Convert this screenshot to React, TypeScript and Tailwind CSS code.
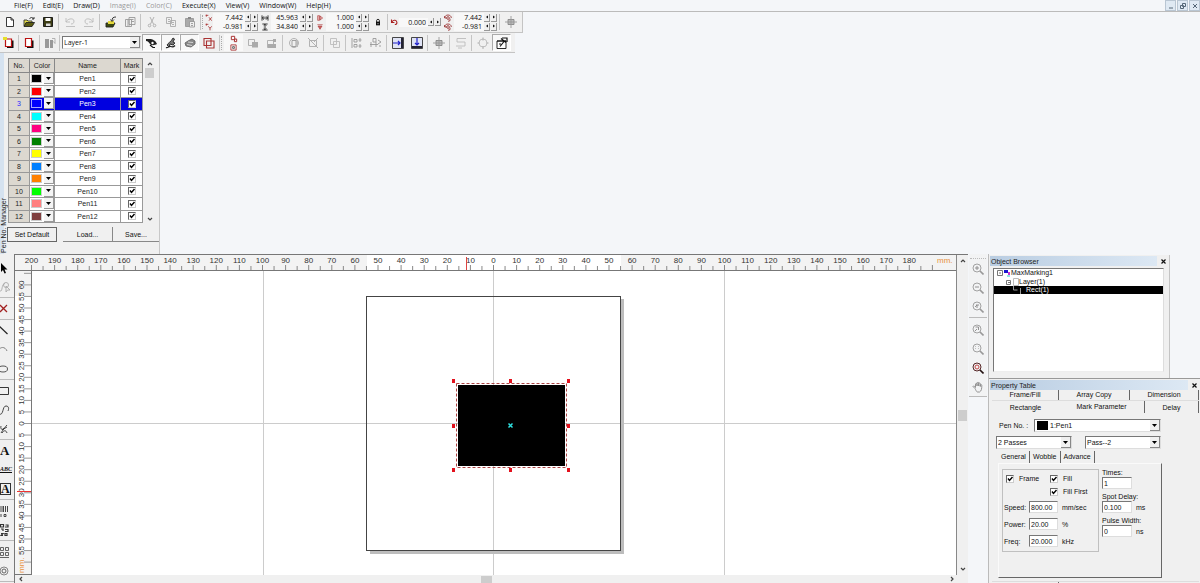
import { useState } from "react";
import type { ReactNode } from "react";
import clsx from "clsx";

const MENUS = [
  { label: "File(F)" },
  { label: "Edit(E)" },
  { label: "Draw(D)" },
  { label: "Image(I)", disabled: true },
  { label: "Color(C)", disabled: true },
  { label: "Execute(X)" },
  { label: "View(V)" },
  { label: "Window(W)" },
  { label: "Help(H)" },
];

const PENS = [
  "#000000",
  "#ff0000",
  "#0000ff",
  "#00ffff",
  "#ff0080",
  "#008000",
  "#ffff00",
  "#0080ff",
  "#ff8000",
  "#00ff00",
  "#ff8080",
  "#804040",
];

// pixels per 5 mm on the rulers
const STEP = 11.55;

const ICONS: Record<string, ReactNode> = {
  new: <path d="M2.500 1.500h4.500l2.500 2.500v6.500h-7zM7 1.500v2.500h2.500" fill="#fff" stroke="#222" />,
  open: (
    <>
      <path d="M1 10V4h3l1 1h4v2" fill="#e8e04a" stroke="#333" />
      <path d="M1 10.500l2-4h8.500l-2.500 4z" fill="#5b5b12" stroke="#222" />
      <path d="M6.500 3c1-2 3-2 4 0M9 3h2V1" stroke="#222" />
    </>
  ),
  save: (
    <>
      <path d="M1.500 1.500h9v9h-9z" fill="#3c3c14" stroke="#111" />
      <path d="M3.500 2h5v3h-5z" fill="#fff" />
      <path d="M4 7.500h4.500V10H4z" fill="#ddd" />
    </>
  ),
  undo: <path d="M2 2v4h4M2 6c2-4 8-4 8-1 0 2-1 3-3 3M2 10.500h9" stroke="#bbb" />,
  redo: <path d="M10 2v4H6M10 6C8 2 2 2 2 5c0 2 1 3 3 3M1 10.500h9" stroke="#bbb" />,
  importFile: (
    <>
      <path d="M1 7h9l-2 4H1z" fill="#3d4a10" stroke="#222" />
      <path d="M3 5h6v3H3z" fill="#e5d83c" />
      <path d="M7 5c0-3 1-4 4-4M5.500 3.500L7 5.500l2-2" stroke="#222" />
    </>
  ),
  hatch: (
    <>
      <path d="M1.500 3.500h6v7h-6zM5 1.500h6v7H5z" stroke="#999" />
      <path d="M3 5h3M3 7h3M3 9h3M6.500 3.500h3M7 5.500h3" stroke="#999" />
    </>
  ),
  cut: (
    <>
      <path d="M4 1l3.500 7M8 1L4.500 8" stroke="#aaa" />
      <circle cx="3.500" cy="9.500" r="1.300" stroke="#aaa" />
      <circle cx="8.500" cy="9.500" r="1.300" stroke="#aaa" />
    </>
  ),
  copy: <path d="M1.500 1.500h5v6h-5zM5.500 4.500h5v6h-5zM3 3.500h2M3 5.500h2M7 6.500h2M7 8.500h2" stroke="#aaa" />,
  paste: (
    <>
      <path d="M1.500 2.500h8v8h-8z" fill="#aaa" stroke="#999" />
      <path d="M4 1h3v2H4z" fill="#888" />
      <path d="M5.500 5.500h5v5.500h-5zM7 7.500h2M7 9.500h2" fill="#eee" stroke="#999" />
    </>
  ),
  axis: <path d="M1 2h4M2 1v3M6 5l4 5M10 5l-4 5" stroke="#a33" strokeWidth="1.300" />,
  axisY: <path d="M1 2h4M2 1v3M5 5l2.500 3L10 5M7.500 8v3" stroke="#a33" strokeWidth="1.300" />,
  width: <path d="M1.500 2v8M10.500 2v8M2 6h8M4.500 3.500L2 6l2.500 2.500M7.500 3.500L10 6l-2.500 2.500" stroke="#222" strokeWidth="1.300" />,
  height: <path d="M2 1.500h8M2 10.500h8M6 2v8M4 4l2-2 2 2M4 8l2 2 2-2" stroke="#222" strokeWidth="1.300" />,
  scaleX: <path d="M2.500 2.500h3v7h-3zM6 3l4 3-4 3z" fill="#e9b5b5" stroke="#a33" />,
  scaleY: <path d="M2 2.500h8M3 4.500h6L6 9.500z" fill="#c66" stroke="#a33" />,
  lock: (
    <>
      <path d="M3 5.500h6V11H3z" fill="#111" />
      <path d="M4 6V3.500c0-2 4-2 4 0V6" stroke="#111" strokeWidth="1.400" />
      <path d="M5.500 7.500h1v2h-1z" fill="#fff" />
    </>
  ),
  rotate: <path d="M3 3v3.500h3.500M3.500 6c2-3.500 6-2 6 .5 0 1.500-1 2.500-2.500 2.500" stroke="#a22" strokeWidth="1.300" />,
  rotCenter: (
    <>
      <circle cx="6" cy="6" r="2" stroke="#933" strokeWidth="1.300" />
      <path d="M1 6c0-6 10-6 10 0M1 3v3h3M9 7v3l-3 1" stroke="#933" strokeWidth="1.300" />
    </>
  ),
  center: (
    <>
      <path d="M3 3.500h6v5H3z" fill="#bbb" stroke="#888" />
      <path d="M6 0v12M0 6h12" stroke="#999" />
    </>
  ),
  newLayer: (
    <>
      <path d="M4 3.500h6.500v7.500H4z" fill="#111" />
      <path d="M2.500 2h6v7.500h-6z" fill="#fff" stroke="#b11" strokeWidth="1.200" />
      <path d="M0 0h4v3H0z" fill="#e6df2a" />
    </>
  ),
  layer: (
    <>
      <path d="M4 3.500h6.500v7.500H4z" fill="#111" />
      <path d="M2.500 1.500h6v8h-6z" fill="#fff" stroke="#b11" strokeWidth="1.200" />
    </>
  ),
  layerMove: (
    <>
      <path d="M1 2h4v9H1zM6 3h3v8H6z" fill="#999" />
      <path d="M8 1.500h3v5M9.500 4.500l1.500 2" stroke="#aaa" />
    </>
  ),
  eye: (
    <>
      <path d="M0 2l3 0c4 0 7 2 8 5-2 1-5 2-7 0C3 5.500 2 4 0 4z" fill="#222" />
      <circle cx="6.500" cy="6" r="1.200" fill="#fff" />
      <path d="M4 8l3 2.500h2" stroke="#111" strokeWidth="1.200" />
    </>
  ),
  pencil: (
    <>
      <path d="M2 8c1-2 4-3 6-7l1.500 1L8 5l2 1-2 2-3-1-1 3z" fill="#777" stroke="#222" />
      <path d="M1 10.500c2 1 3-2 5-1s3 0 4-1" stroke="#222" strokeWidth="1.300" />
    </>
  ),
  printer: (
    <>
      <path d="M1 6l3-2 4-2 3 2v3L7 10 2 9z" fill="#888" stroke="#666" />
      <path d="M4 5l5 .5M3 7.500l5 1" stroke="#ddd" />
    </>
  ),
  squares: <path d="M1 1.500h7v7H1zM3.500 4h7.500v7H3.500z" stroke="#a33" strokeWidth="1.100" />,
  snapLink: <path d="M2 2h5v5H2zM7 6h3v4H6.500z" stroke="#a33" strokeWidth="1.500" />,
  snapBox: (
    <>
      <path d="M1.500 1.500h9v9h-9z" stroke="#a33" strokeWidth="1.500" />
      <path d="M4.500 4.500h3v3h-3z" stroke="#333" strokeWidth="1.200" />
    </>
  ),
  union: (
    <>
      <path d="M1.500 2.500h6v6h-6z" stroke="#aaa" />
      <path d="M5 5h6v5.500H5z" fill="#aaa" />
    </>
  ),
  subtract: (
    <>
      <path d="M1.500 3.500h6v7h-6z" stroke="#aaa" />
      <path d="M2 7h8v4H2zM7 2h3v3H7z" fill="#aaa" />
    </>
  ),
  solid: (
    <>
      <circle cx="6" cy="6" r="4.500" stroke="#aaa" />
      <path d="M4 3.500h4v6H4z" stroke="#999" />
      <path d="M8 3h2v7H8z" fill="#bbb" />
    </>
  ),
  noFill: (
    <>
      <path d="M2.500 3.500h7v6h-7z" stroke="#aaa" />
      <path d="M1 1l10 10M11 1L7 5" stroke="#aaa" />
    </>
  ),
  group: <path d="M1.500 1.500h6v6h-6zM4.500 4.500h6v6h-6z" stroke="#bbb" />,
  alignTop: <path d="M1 1v10M3 2.500h3v2.500H3zM3 7.500h3V10H3zM9 1v4M7.500 3h3M9 7v4M7.500 9h3" stroke="#999" />,
  alignSide: <path d="M0 7.500h8M3 1.500h3V5H3zM1 5v5M6 5v5M8 3l3 2-3 2M9 9h2" stroke="#999" />,
  dockRight: (
    <>
      <path d="M.5.500h11v11H.5z" fill="#dfe3f5" stroke="#333" />
      <path d="M9 1h2v10H9z" fill="#223" />
      <path d="M1 6h7M6 4l2 2-2 2" stroke="#22c" strokeWidth="1.200" />
    </>
  ),
  dockDown: (
    <>
      <path d="M.5.500h11v11H.5z" fill="#dfe3f5" stroke="#333" />
      <path d="M1 9h10v2H1z" fill="#223" />
      <path d="M6 1v7M4 6l2 2 2-2" stroke="#22c" strokeWidth="1.200" />
    </>
  ),
  path: <path d="M11 1.500H2v3.500h8v4H1M3 11h4" stroke="#bbb" />,
  circle: (
    <>
      <circle cx="6" cy="6" r="4" stroke="#bbb" />
      <path d="M6 .5v3M6 9v3M.5 6h2M9.500 6h2" stroke="#aaa" />
    </>
  ),
  props: (
    <>
      <path d="M1 4h9v7.500H1z" fill="#fff" stroke="#111" />
      <path d="M1 4h9M4 9.500l4-5M5 1.500l5 4M6 1h5v4M3 7h2" stroke="#111" strokeWidth="1.200" />
    </>
  ),
  cursor: <path d="M1 1v9l2-2 1.500 3.500L6 11 4.500 7.500h3z" fill="#000" />,
  node: (
    <>
      <path d="M0 10C3 11 1 3 5 2.500M6 5v6l1.500-2H10z" stroke="#aaa" />
      <circle cx="6" cy="4" r="2.500" stroke="#aaa" />
    </>
  ),
  del: <path d="M0 2l7 7M7 2L0 9" stroke="#a12020" strokeWidth="1.300" />,
  line: <path d="M-1 1l8.500 8" stroke="#222" strokeWidth="1.200" />,
  arc: <path d="M-1 6c1-3 6-4 8 1" stroke="#777" />,
  ellipse: <ellipse cx="3" cy="6" rx="4.500" ry="3" stroke="#444" />,
  rect: <path d="M-1 2.500h9.500v7H-1z" stroke="#222" />,
  curve: <path d="M-1 10c5 2 3-8 7-8 3 0 3 3 2 5" stroke="#333" />,
  pen: <path d="M1 10c2-3 4-6 6-8M1 3c-1 4 2 4 3 2M2 10c2-3 4-3 5 0M2 7l5-3" stroke="#333" />,
  barcode: <path d="M0 1v6M2 1v6M3.500 1v6M5.500 1v6M7.500 1v6M1 9v3M4 9.500h2v2H4z" stroke="#333" />,
  qr: <path d="M.5.500h3v2.500h-3zM5.500 1H8v2H5M1 5h2v2M5 5.500h3v2H5M1 9.500h2l-2 2h2M5 9.500h2v2H5z" stroke="#333" strokeWidth="1.200" />,
  tiles: <path d="M.5 1.500h3v3h-3zM5.500 1.500h3v3h-3zM.5 6.500h3v3h-3zM5.500 6.500h3v3h-3zM0 11.500h9" stroke="#555" />,
  spiral: (
    <>
      <circle cx="4" cy="6" r="4" stroke="#777" />
      <circle cx="4" cy="6" r="2" stroke="#555" />
    </>
  ),
  zoomIn: <path d="M3 5h4M5 3v4" stroke="#888" />,
  zoomOut: <path d="M3 5h4" stroke="#888" />,
  zoomPrev: <path d="M3 6l2-2v3M4 4h3" stroke="#888" />,
  zoomAll: <path d="M3.500 3h3v3M3 7l2-2" stroke="#888" />,
  zoomPage: <path d="M3.500 3v4M6.500 3v4" stroke="#bbb" strokeDasharray="1" />,
  zoomObj: <circle cx="5" cy="5" r="2" stroke="#b33" />,
  hand: (
    <path
      d="M3 7.500L1 5.500c.5-1 1.500-.5 2.500 1V3c.5-1 1.500-1 1.500 0v2V2c.5-1 1.700-1 1.700 0v3V2.500c.5-.8 1.600-.6 1.600.3V5.500V4c.5-.8 1.500-.5 1.500.3 0 3.500-.3 5.700-2.300 6.700H5.500C4 10.500 4 9 3 7.500z"
      stroke="#888"
    />
  ),
};

function Icon({ name, size = "h-3 w-3" }: { name: string; size?: string }) {
  const lens = name.startsWith("zoom");
  const dark = name === "zoomObj";
  return (
    <svg viewBox="0 0 12 12" className={clsx("shrink-0", size)} fill="none" strokeWidth="0.9" aria-hidden>
      {lens && (
        <>
          <circle cx="5" cy="5" r="4" stroke={dark ? "#411" : "#999"} />
          <path d="M8 8l3.500 3.500" stroke={dark ? "#211" : "#999"} strokeWidth="1.600" />
        </>
      )}
      {ICONS[name]}
    </svg>
  );
}

function Tool({ name, width = "w-[19px]", pressed }: { name: string; width?: string; pressed?: boolean }) {
  return (
    <button
      type="button"
      aria-label={name}
      aria-pressed={pressed}
      className={clsx(
        "flex h-[17px] shrink-0 items-center justify-center",
        width,
        pressed && "border border-b-white border-r-white border-l-[#aaa] border-t-[#aaa] bg-[#f8f8f8]"
      )}
    >
      <Icon name={name} />
    </button>
  );
}

const Sep = () => <div className="mx-px h-4 w-px shrink-0 bg-[#c4c4c4]" />;
const Grip = () => <div className="mr-px h-3.5 w-0.5 shrink-0 border-l border-dotted border-[#aaa]" />;

function Spin({ label, value, width }: { label: string; value: string; width: string }) {
  const [text, setText] = useState(value);
  return (
    <div className="flex h-[9px] items-center">
      <input
        aria-label={label}
        value={text}
        onChange={(e) => setText(e.target.value)}
        className={clsx("h-[9px] bg-[#f8f8f8] pr-0.5 text-right leading-[9px] outline-none", width)}
      />
      <div className="flex w-3.5 gap-px">
        {["◂", "▸"].map((arrow) => (
          <button
            key={arrow}
            type="button"
            aria-label={`${label} ${arrow === "◂" ? "down" : "up"}`}
            className="flex h-2 w-1.5 items-center justify-center border-b border-r border-[#999] bg-[#f0f0f0]"
          >
            <svg viewBox="0 0 4 4" className="h-1 w-1" aria-hidden>
              <path d={arrow === "◂" ? "M3 .5v3L1 2z" : "M1 .5v3L3 2z"} fill="#111" />
            </svg>
          </button>
        ))}
      </div>
    </div>
  );
}

function SpinPair({
  icons,
  iconWidth = "w-3",
  width,
  labels,
  values,
}: {
  icons: [string, string];
  iconWidth?: string;
  width: string;
  labels: [string, string];
  values: [string, string];
}) {
  return (
    <div className="flex shrink-0 flex-col">
      {values.map((v, i) => (
        <div key={labels[i]} className="flex items-center">
          <div className={clsx("flex justify-center", iconWidth)}>
            <Icon name={icons[i]} size="h-2 w-2" />
          </div>
          <Spin label={labels[i]} value={v} width={width} />
        </div>
      ))}
    </div>
  );
}

function Combo({
  label,
  options,
  className,
  swatch,
}: {
  label: string;
  options: string[];
  className?: string;
  swatch?: boolean;
}) {
  return (
    <div className={clsx("relative h-[13px] border border-[#777] border-b-[#ddd] border-r-[#ddd] bg-white", className)}>
      <select
        aria-label={label}
        className={clsx("block h-full w-full appearance-none bg-transparent leading-[11px] outline-none", swatch ? "pl-[15px]" : "pl-px")}
      >
        {options.map((o) => (
          <option key={o}>{o}</option>
        ))}
      </select>
      {swatch && <span className="pointer-events-none absolute left-0.5 top-px h-[9px] w-[11px] bg-black" />}
      <span className="pointer-events-none absolute right-0 top-0 flex h-full w-2.5 items-center justify-center border-b border-r border-[#888] bg-[#f0f0f0]">
        <DownArrow />
      </span>
    </div>
  );
}

const DownArrow = () => (
  <svg viewBox="0 0 5 3" className="h-[3px] w-[5px]" aria-hidden>
    <path d="M0 0h5L2.500 3z" fill="#000" />
  </svg>
);

function Check({ label, text }: { label: string; text?: string }) {
  return (
    <label className="inline-flex items-center gap-[5px] leading-[9px]">
      <span className="relative block h-2 w-2">
        <input
          type="checkbox"
          defaultChecked
          aria-label={label}
          className="peer block h-2 w-2 appearance-none border border-[#ccc] border-l-[#666] border-t-[#666] bg-white"
        />
        <svg viewBox="0 0 8 8" className="pointer-events-none absolute inset-0 hidden peer-checked:block" fill="none" aria-hidden>
          <path d="M2 3.500l1.500 2L6.500 2" stroke="#000" strokeWidth="1.400" />
        </svg>
      </span>
      {text}
    </label>
  );
}

function Chevron({ d }: { d: string }) {
  return (
    <svg viewBox="0 0 6 6" className="h-1.5 w-1.5" fill="none" aria-hidden>
      <path d={d} stroke="#444" strokeWidth="1.200" />
    </svg>
  );
}

function PenManager() {
  const [selected, setSelected] = useState(2);
  return (
    <section className="flex w-40 border-r border-[#c8c8c8] bg-[#f0f0f0]">
      <div className="flex w-[7px] items-end bg-gradient-to-r from-[#d5e2f0] from-60% to-[#f0f0f0] to-60% pb-px">
        <span className="whitespace-nowrap leading-[7px] text-[#222] [writing-mode:sideways-lr]">Pen No. Manager</span>
      </div>
      <div className="flex flex-1 flex-col">
        <div className="flex pl-px pt-[5px]">
          <table className="h-[165px] w-[135px] table-fixed border-collapse border border-[#777] bg-white text-center text-[#222]">
            <thead className="bg-[#dcd8d0]">
              <tr className="h-3.5">
                <th className="w-[21px] border border-[#888] p-0 font-normal">No.</th>
                <th className="w-[25px] border border-[#888] p-0 font-normal">Color</th>
                <th className="border border-[#888] p-0 font-normal">Name</th>
                <th className="w-[22px] border border-[#888] p-0 font-normal">Mark</th>
              </tr>
            </thead>
            <tbody>
              {PENS.map((color, i) => (
                <tr
                  key={color}
                  onClick={() => setSelected(i)}
                  className={clsx(i === selected && "bg-[#0000e0] text-white")}
                >
                  <td className={clsx("border border-[#999] bg-[#dcd8d0] p-0", i === selected && "text-[#2a2aff]")}>{i + 1}</td>
                  <td className="border border-[#999] p-0">
                    <div className="flex items-center justify-between pl-px">
                      <span
                        className={clsx("h-[9px] w-[11px] border", i === selected ? "border-[#aaaaff]" : "border-[#ccc]")}
                        style={{ backgroundColor: color }}
                      />
                      <button
                        type="button"
                        aria-label={`Pen${i + 1} color`}
                        className="flex h-[11px] w-2.5 items-center justify-center border-b border-r border-[#999] bg-[#f4f4f4]"
                      >
                        <DownArrow />
                      </button>
                    </div>
                  </td>
                  <td className="border border-[#999] p-0">Pen{i + 1}</td>
                  <td className="border border-[#999] p-0">
                    <div className="flex justify-center">
                      <Check label={`Mark Pen${i + 1}`} />
                    </div>
                  </td>
                </tr>
              ))}
            </tbody>
          </table>
          <div className="ml-px flex w-[11px] flex-col items-center pb-px pt-[3px]">
            <Chevron d="M1 4l2-2 2 2" />
            <div className="mt-px h-2.5 w-[9px] bg-[#cdcdcd]" />
            <div className="flex-1" />
            <Chevron d="M1 2l2 2 2-2" />
          </div>
        </div>
        <div className="mt-1 flex">
          <button type="button" className="h-[15px] w-[50px] border border-[#666] bg-[#f0f0f0]">
            Set Default
          </button>
          <button type="button" className="ml-1.5 h-[15px] w-[50px] border-b border-r border-[#888]">
            Load...
          </button>
          <button type="button" className="h-[15px] flex-1 border-b border-[#888]">
            Save...
          </button>
        </div>
      </div>
    </section>
  );
}

const TOOLBOX = [
  ["cursor", "node"],
  ["del"],
  ["line", "arc", "ellipse"],
  ["rect", "curve", "pen"],
  ["text", "arcText", "boxText"],
  ["barcode", "qr"],
  ["tiles", "spiral"],
];

function Toolbox() {
  return (
    <nav aria-label="Draw tools" className="flex w-3.5 flex-col bg-[#f0f0f0] pt-[3px]">
      {TOOLBOX.map((group) => (
        <div key={group[0]} className="flex flex-col border-b border-[#bbb] py-px">
          {group.map((name) => (
            <button key={name} type="button" aria-label={name} className="flex h-[19px] items-center">
              {name === "text" && <span className="font-['Liberation_Serif',serif] text-[13px] font-bold">A</span>}
              {name === "arcText" && (
                <span className="font-['Liberation_Serif',serif] text-[6px] font-bold italic underline">ABC</span>
              )}
              {name === "boxText" && (
                <span className="border border-[#333] font-['Liberation_Serif',serif] text-[12px] font-bold leading-[10px]">A</span>
              )}
              {ICONS[name] && <Icon name={name} />}
            </button>
          ))}
        </div>
      ))}
    </nav>
  );
}

function Workspace() {
  const topTicks = Array.from({ length: 79 }, (_, i) => i - 40);
  const sideTicks = Array.from({ length: 26 }, (_, i) => i - 13);
  return (
    <main className="flex min-w-0 flex-1 flex-col border-l border-t border-[#777]">
      <div className="flex min-h-0 flex-1">
        <div className="flex min-w-0 flex-1 flex-col border-r border-[#888]">
          <svg className="h-4 w-full shrink-0 border-b border-[#777] bg-[#f3f3f3] text-[8px]">
            <rect x="352" y="0" width="254" height="16" fill="#fff" />
            {topTicks.map((n) => {
              const x = 478.5 + n * STEP;
              return (
                <g key={n}>
                  <path d={`M${x} ${n % 2 ? 11 : 10}v6`} stroke="#888" />
                  {n % 2 === 0 && n < 38 && (
                    <text x={x} y="8" textAnchor="middle" fill="#333">
                      {Math.abs(n * 5)}
                    </text>
                  )}
                </g>
              );
            })}
            <path d="M451.500 2v14" stroke="#d44" />
            <text x="922" y="8" fill="#e8923c">
              mm.
            </text>
          </svg>
          <div className="flex min-h-0 flex-1">
            <svg className="h-full w-[17px] shrink-0 border-b border-r border-[#777] bg-[#f3f3f3] text-[8px]">
              <rect x="0" y="25" width="17" height="254" fill="#fff" />
              {sideTicks.map((n) => {
                const y = 152.5 + n * STEP;
                return (
                  <g key={n}>
                    <path d={`M9 ${y}h7`} stroke="#999" />
                    {n > -13 && n < 12 && (
                      <text transform={`translate(9 ${y}) rotate(-90)`} textAnchor="middle" fill="#333">
                        {Math.abs(n * 5)}
                      </text>
                    )}
                  </g>
                );
              })}
              <path d="M2 220.500h14" stroke="#e33" />
              <text transform="translate(9 302) rotate(-90)" fill="#e8923c">
                mm.
              </text>
            </svg>
            <svg className="h-full min-w-0 flex-1 bg-white" fill="none">
              <path d="M231.500 0v400M461.500 0v400M692.500 0v400M0 152.500h2000" stroke="#ccc" />
              <path d="M338 281.500h252.500V28" stroke="#bdbdbd" strokeWidth="3" />
              <rect x="334.500" y="25.500" width="254" height="254" stroke="#444" />
              <rect x="426" y="114" width="107" height="81" fill="#000" />
              <rect x="424.500" y="112.500" width="110" height="84" stroke="#a44" strokeDasharray="3 2" />
              {[422, 479, 537].map((x) =>
                [110, 155, 199].map((y) =>
                  x === 479 && y === 155 ? null : <rect key={`${x}-${y}`} x={x - 2} y={y - 2} width="3" height="4" fill="#e3101c" />
                )
              )}
              <path d="M476.500 152.500l4 4M480.500 152.500l-4 4" stroke="#2fe0e0" strokeWidth="1.500" />
            </svg>
          </div>
        </div>
        <div className="flex w-[11px] flex-col items-center bg-[#f0f0f0] py-[3px]">
          <Chevron d="M1 4l2-2 2 2" />
          <div className="flex-1" />
          <div className="h-[11px] w-[9px] bg-[#cdcdcd]" />
          <div className="flex-1" />
          <Chevron d="M1 2l2 2 2-2" />
        </div>
      </div>
      <div className="flex h-2 items-center justify-between bg-[#f0f0f0] pl-[3px] pr-[13px]">
        <Chevron d="M4 1L2 3l2 2" />
        <div className="h-[7px] w-[11px] bg-[#cdcdcd]" />
        <Chevron d="M2 1l2 2-2 2" />
      </div>
    </main>
  );
}

function PanelTitle({ title }: { title: string }) {
  return (
    <div className="flex h-2.5 items-center justify-between bg-gradient-to-r from-[#b9cde2] to-[#dfeaf5] pl-px">
      <h2 className="leading-[9px] text-[#222]">{title}</h2>
      <button type="button" aria-label={`Close ${title}`} className="flex h-2.5 w-3 items-center justify-center bg-[#f0f0f0]">
        <CloseMark />
      </button>
    </div>
  );
}

const CloseMark = () => (
  <svg viewBox="0 0 5 5" className="h-[5px] w-[5px]" fill="none" aria-hidden>
    <path d="M.5.5l4 4M4.500.5l-4 4" stroke="#111" strokeWidth="1.200" />
  </svg>
);

function ObjectBrowser() {
  return (
    <section className="flex h-[123px] w-[181px] flex-col border-r border-[#c4c4c4] bg-[#f0f0f0] pl-px pt-px">
      <PanelTitle title="Object Browser" />
      <ul className="mb-1.5 ml-[3px] mr-[5px] mt-0.5 flex-1 border border-b-[#eee] border-r-[#ddd] border-l-[#777] border-t-[#777] bg-white leading-[8px]">
        <li className="flex h-2 items-center pl-[3px]">
          <svg viewBox="0 0 14 8" className="h-2 w-3.5" fill="none" aria-hidden>
            <path d="M.5 1.500h5v5h-5zM2 4h2" stroke="#777" />
            <path d="M7 1h4v3H7z" fill="#1616d0" />
            <path d="M11 3h2v3h-2z" fill="#c3c" />
            <path d="M10 7h3" stroke="#2cc" />
          </svg>
          MaxMarking1
        </li>
        <li className="flex h-[9px] items-center pl-3">
          <svg viewBox="0 0 13 8" className="h-2 w-[13px]" fill="none" aria-hidden>
            <path d="M.5 2.500h4v4h-4zM2 4.500h3" stroke="#777" />
            <path d="M7.500.5h5v7h-5z" stroke="#bbb" />
          </svg>
          Layer(1)
        </li>
        <li className="flex h-2 items-center gap-1 bg-black pl-[19px] text-white">
          <svg viewBox="0 0 9 8" className="h-2 w-[9px]" fill="none" aria-hidden>
            <path d="M.5 0v4h4M7.500 2v6" stroke="#999" />
          </svg>
          Rect(1)
        </li>
      </ul>
    </section>
  );
}

function Field({ label, value, unit }: { label: string; value: string; unit: string }) {
  return (
    <label className="flex items-center">
      <span className="w-[25px] whitespace-nowrap">{label}</span>
      <input defaultValue={value} className="h-3 w-[29px] border border-[#ddd] border-l-[#777] border-t-[#777] bg-white pl-px outline-none" />
      <span className="ml-1">{unit}</span>
    </label>
  );
}

function StackField({ label, value, unit }: { label: string; value: string; unit?: string }) {
  return (
    <label className="block">
      <span className="block h-2 whitespace-nowrap leading-[8px]">{label}</span>
      <span className="flex items-center">
        <input defaultValue={value} className="h-3 w-[30px] border border-[#ddd] border-l-[#777] border-t-[#777] bg-white pl-px outline-none" />
        {unit && <span className="ml-1">{unit}</span>}
      </span>
    </label>
  );
}

function PropertyTable() {
  return (
    <section className="flex min-h-0 flex-1 flex-col border-t border-[#999] bg-[#f0f0f0] pl-px pt-px">
      <PanelTitle title="Property Table" />
      <div className="ml-0.5 mr-px grid h-[11px] grid-cols-[67px_71px_1fr] border-b border-[#ddd] leading-[10px]">
        {["Frame/Fill", "Array Copy", "Dimension"].map((t) => (
          <button key={t} type="button" className="border-r border-[#666]">
            {t}
          </button>
        ))}
      </div>
      <div className="ml-0.5 mr-px grid h-3 grid-cols-[67px_86px_1fr] leading-[11px]">
        {["Rectangle", "Mark Parameter", "Delay"].map((t) => (
          <button
            key={t}
            type="button"
            className={clsx(t !== "Rectangle" && "border-r border-[#666]", t === "Mark Parameter" && "pb-0.5 leading-[9px]")}
          >
            {t}
          </button>
        ))}
      </div>
      <div className="flex min-h-0 flex-1 flex-col pl-1.5 pt-1.5">
        <div className="flex w-[165px] items-center pl-[3px]">
          <span className="w-[35px]">Pen No. :</span>
          <Combo label="Pen No." options={["1:Pen1", "2:Pen2", "3:Pen3"]} swatch className="flex-1" />
        </div>
        <div className="mt-1 flex w-[165px] justify-between">
          <Combo label="Passes" options={["2 Passes", "1 Pass"]} className="w-[76px]" />
          <Combo label="Pass" options={["Pass--2", "Pass--1"]} className="w-[76px]" />
        </div>
        <div className="mt-0.5 flex h-3 pl-0.5">
          {["General", "Wobble", "Advance"].map((t) => (
            <button key={t} type="button" className="h-3 border-r border-[#666] px-[3px] leading-[12px]">
              {t}
            </button>
          ))}
        </div>
        <div className="ml-0.5 flex h-[115px] w-[164px] gap-[3px] border border-b-[#666] border-r-[#666] border-l-[#fafafa] border-t-[#fafafa] pl-[3px] pt-[5px]">
          <fieldset className="flex h-[83px] w-[97px] flex-col gap-[5px] border border-[#c0c0c0] pl-px">
            <div className="grid grid-cols-[44px_1fr] gap-y-1 pl-0.5 pt-1">
              <Check label="Frame" text="Frame" />
              <Check label="Fill" text="Fill" />
              <span />
              <Check label="Fill First" text="Fill First" />
            </div>
            <Field label="Speed:" value="800.00" unit="mm/sec" />
            <Field label="Power:" value="20.00" unit="%" />
            <Field label="Freq:" value="20.000" unit="kHz" />
          </fieldset>
          <div className="flex flex-col gap-1">
            <StackField label="Times:" value="1" />
            <StackField label="Spot Delay:" value="0.100" unit="ms" />
            <StackField label="Pulse Width:" value="0" unit="ns" />
          </div>
        </div>
      </div>
      <div className="ml-0.5 mr-px grid h-0.5 grid-cols-[67px_1fr] border-t border-[#ddd]">
        <div className="border-r border-[#666]" />
      </div>
    </section>
  );
}

export default function App() {
  return (
    <div className="flex h-screen flex-col overflow-hidden bg-[#f4f6f9] font-['Liberation_Sans',Arial,sans-serif] text-[7px] leading-[9px] text-[#111]">
      <header className="font-['Open_Sans',sans-serif]">
        <div className="flex h-3 items-center border-b border-[#bbb] pl-[9px]">
          <nav className="flex">
            {MENUS.map((m) => (
              <button key={m.label} type="button" disabled={m.disabled} className="px-[5px] leading-[10px] disabled:text-[#999]">
                {m.label}
              </button>
            ))}
          </nav>
          <div className="ml-auto flex h-full gap-px">
            {["M1 5h4", "M2.500.5h3v3h-3zM.5 2.500h3v3h-3z", "M1 1l4 4M5 1L1 5"].map((d, i) => (
              <button
                key={d}
                type="button"
                aria-label={["Minimize", "Restore", "Close"][i]}
                className="flex h-full w-[11px] items-center justify-center border border-[#b9c6d3] bg-[#dfe9f3]"
              >
                <svg viewBox="0 0 6 6" className="h-1.5 w-1.5" fill="none" aria-hidden>
                  <path d={d} stroke="#567" />
                </svg>
              </button>
            ))}
          </div>
        </div>
        <div className="flex h-[21px] w-[523px] items-center border-b border-r border-[#c4c4c4] bg-[#f0f0f0]">
          <Tool name="new" />
          <Tool name="open" />
          <Tool name="save" />
          <Sep />
          <Tool name="undo" />
          <Tool name="redo" />
          <Sep />
          <Tool name="importFile" />
          <Tool name="hatch" />
          <Sep />
          <Tool name="cut" />
          <Tool name="copy" />
          <Tool name="paste" />
          <Sep />
          <Grip />
          <SpinPair icons={["axis", "axisY"]} iconWidth="w-2" width="w-8" labels={["X", "Y"]} values={["7.442", "-0.981"]} />
          <SpinPair icons={["width", "height"]} width="w-[29px]" labels={["Width", "Height"]} values={["45.963", "34.840"]} />
          <SpinPair icons={["scaleX", "scaleY"]} width="w-[30px]" labels={["Scale X", "Scale Y"]} values={["1.000", "1.000"]} />
          <button type="button" aria-label="Lock ratio" className="flex w-4 shrink-0 justify-center">
            <Icon name="lock" size="h-2 w-2" />
          </button>
          <Sep />
          <div className="flex shrink-0 items-center">
            <Icon name="rotate" size="h-2.5 w-2.5" />
            <Spin label="Angle" value="0.000" width="w-[29px]" />
          </div>
          <SpinPair icons={["rotCenter", "rotCenter"]} width="w-[30px]" labels={["Center X", "Center Y"]} values={["7.442", "-0.981"]} />
          <Sep />
          <Tool name="center" />
        </div>
        <div className="flex h-5 w-[515px] items-center border-b border-[#c4c4c4] bg-[#f0f0f0]">
          <Tool name="newLayer" width="w-[17px]" />
          <Sep />
          <Tool name="layer" width="w-[18px]" />
          <Sep />
          <Tool name="layerMove" width="w-[17px]" />
          <Sep />
          <Combo label="Layer" options={["Layer-1"]} className="mx-px w-[79px]" />
          <Tool name="eye" pressed />
          <Tool name="pencil" pressed />
          <Tool name="printer" pressed />
          <Tool name="squares" />
          <Sep />
          <Grip />
          <button type="button" aria-label="Snap" className="flex h-[17px] w-[19px] shrink-0 flex-col items-center justify-center gap-px bg-[#f8f8f8]">
            <Icon name="snapLink" size="h-2 w-2" />
            <Icon name="snapBox" size="h-[7px] w-[7px]" />
          </button>
          <Tool name="union" />
          <Tool name="subtract" />
          <Sep />
          <Tool name="solid" />
          <Tool name="noFill" />
          <Sep />
          <Tool name="group" />
          <Sep />
          <Tool name="alignTop" />
          <Tool name="alignSide" />
          <Sep />
          <Tool name="dockRight" />
          <Tool name="dockDown" />
          <Sep />
          <Tool name="center" />
          <Sep />
          <Tool name="path" />
          <Sep />
          <Tool name="circle" />
          <Tool name="props" pressed />
        </div>
      </header>
      <div className="flex h-[201px] shrink-0">
        <PenManager />
      </div>
      <div className="flex min-h-0 flex-1">
        <Toolbox />
        <Workspace />
        <nav aria-label="Zoom tools" className="w-5 shrink-0 px-px">
          <div className="flex flex-col items-center border-b border-[#bbb] bg-[#f2f3f4] pt-1">
            <div className="mb-px w-4 border-t border-dotted border-[#bbb]" />
            <Tool name="zoomIn" />
            <div className="h-0.5" />
            <Tool name="zoomOut" />
            <div className="h-0.5" />
            <Tool name="zoomPrev" />
            <div className="my-0.5 h-px w-full bg-[#bbb]" />
            {["zoomAll", "zoomPage", "zoomObj", "hand"].map((n) => (
              <div key={n} className="flex h-[19px] items-center">
                <Tool name={n} />
              </div>
            ))}
          </div>
        </nav>
        <aside className="flex w-[212px] shrink-0 flex-col border-l border-[#bbb] pt-px">
          <ObjectBrowser />
          <PropertyTable />
        </aside>
      </div>
    </div>
  );
}
